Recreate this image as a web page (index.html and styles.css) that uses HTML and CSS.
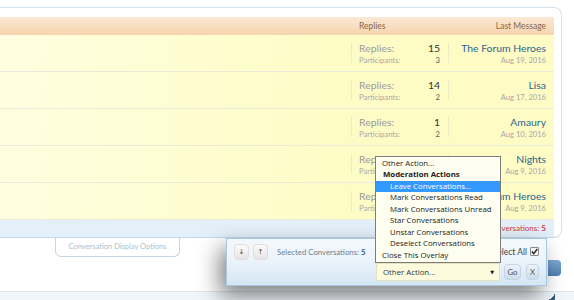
FILE: index.html
```html
<!DOCTYPE html>
<html lang="en">
<head>
    <meta charset="UTF-8">
    <title>Conversations</title>
    <link rel="stylesheet" href="styles.css">
</head>
<body>
    <div class="container">
        <div class="list">
            <div class="row head">
                <div class="title"></div>
                <div class="stats">Replies</div>
                <div class="last">Last Message</div>
            </div>

            <div class="row item">
                <div class="title"></div>
                <div class="stats">
                    <div class="major"><span>Replies:</span><b>15</b></div>
                    <div class="minor"><span>Participants:</span><b>3</b></div>
                </div>
                <div class="last">
                    <a class="user">The Forum Heroes</a>
                    <div class="date">Aug 19, 2016</div>
                </div>
            </div>

            <div class="row item">
                <div class="title"></div>
                <div class="stats">
                    <div class="major"><span>Replies:</span><b>14</b></div>
                    <div class="minor"><span>Participants:</span><b>2</b></div>
                </div>
                <div class="last">
                    <a class="user">Lisa</a>
                    <div class="date">Aug 17, 2016</div>
                </div>
            </div>

            <div class="row item">
                <div class="title"></div>
                <div class="stats">
                    <div class="major"><span>Replies:</span><b>1</b></div>
                    <div class="minor"><span>Participants:</span><b>2</b></div>
                </div>
                <div class="last">
                    <a class="user">Amaury</a>
                    <div class="date">Aug 10, 2016</div>
                </div>
            </div>

            <div class="row item">
                <div class="title"></div>
                <div class="stats">
                    <div class="major"><span>Replies:</span><b>6</b></div>
                    <div class="minor"><span>Participants:</span><b>2</b></div>
                </div>
                <div class="last">
                    <a class="user">Nights</a>
                    <div class="date">Aug 9, 2016</div>
                </div>
            </div>

            <div class="row item">
                <div class="title"></div>
                <div class="stats">
                    <div class="major"><span>Replies:</span><b>3</b></div>
                    <div class="minor"><span>Participants:</span><b>2</b></div>
                </div>
                <div class="last">
                    <a class="user">The Forum Heroes</a>
                    <div class="date">Aug 9, 2016</div>
                </div>
            </div>

            <div class="foot">Selected Conversations: <b>5</b></div>
        </div>
    </div>

    <div class="options">
        <div class="tab">Conversation Display Options</div>
        <div class="blue-end"></div>
    </div>
    <div class="below"><span class="corner"></span></div>

    <!-- inline moderation overlay -->
    <div class="overlay">
        <div class="bar">
            <button class="arrow">&darr;</button>
            <button class="arrow">&uarr;</button>
            <span class="selected">Selected Conversations: <b>5</b></span>
            <span class="select-all">Select All
                <span class="check"><svg width="7" height="7" viewBox="0 0 7 7"><path d="M0.8 3.6 L2.7 5.6 L6.3 1" fill="none" stroke="#222" stroke-width="1.4"/></svg></span>
            </span>
        </div>
        <div class="bar actions">
            <div class="select-wrap">
                <div class="menu">
                    <div class="opt">Other Action...</div>
                    <div class="opt group">Moderation Actions</div>
                    <div class="opt sub active">Leave Conversations...</div>
                    <div class="opt sub">Mark Conversations Read</div>
                    <div class="opt sub">Mark Conversations Unread</div>
                    <div class="opt sub">Star Conversations</div>
                    <div class="opt sub">Unstar Conversations</div>
                    <div class="opt sub">Deselect Conversations</div>
                    <div class="opt">Close This Overlay</div>
                </div>
                <div class="select">Other Action...<span class="caret">&#9660;</span></div>
            </div>
            <button class="btn go">Go</button>
            <button class="btn close">X</button>
        </div>
    </div>
</body>
</html>
```

FILE: styles.css
```css
body {
    margin: 0;
    width: 574px;
    height: 300px;
    overflow: hidden;
    position: relative;
    background: #ffffff;
    font-family: Lato, "Liberation Sans", sans-serif;
    color: #333;
}
.container {
    box-sizing: border-box;
    width: 562px;
    margin-top: 7px;
    padding: 9px 7px 0 0;
    border: 1px solid #d5e3ec;
    border-left: none;
    border-bottom-color: #c4d8e7;
    border-radius: 0 8px 8px 0;
}
.row {
    display: grid;
    grid-template-columns: 1fr 98px 105px;
}
.head {
    height: 18px;
    line-height: 18px;
    font-size: 8.5px;
    color: #8d6746;
    background: linear-gradient(#fbe8d4, #f6d4ae);
}
.head .stats {
    padding-left: 8px;
}
.head .last {
    text-align: right;
    padding-right: 8px;
}
.item {
    height: 36px;
    border-bottom: 1px solid #e9ecd8;
    background: linear-gradient(100deg, #fffee0, #fefcc6 60%, #fefbc4);
}
.item .stats {
    padding: 6px 9px 0 8px;
    background:
        linear-gradient(#efeac4, #efeac4) left 8px / 1px 20px no-repeat,
        linear-gradient(#efeac4, #efeac4) right 8px / 1px 20px no-repeat;
}
.major, .minor {
    display: flex;
    justify-content: space-between;
}
.major {
    font-size: 10.4px;
    line-height: 14px;
    color: #9a9a9a;
}
.major b {
    font-weight: normal;
    color: #333;
}
.minor {
    font-size: 7.6px;
    line-height: 11px;
    color: #a8a8a8;
}
.minor b {
    font-weight: normal;
    color: #555;
}
.item .last {
    padding: 6px 8px 0 0;
    text-align: right;
}
.user {
    display: block;
    font-size: 10.4px;
    line-height: 14px;
    color: #2a6592;
}
.date {
    font-size: 7.6px;
    line-height: 11px;
    color: #a8a8a8;
}
.foot {
    height: 17px;
    line-height: 17px;
    padding-right: 8px;
    text-align: right;
    font-size: 8px;
    color: #d23b3b;
    background: #e3eff9;
}
.options {
    height: 53px;
    display: flex;
    justify-content: space-between;
    align-items: flex-start;
    border-bottom: 1px solid #dbe5ec;
}
.tab {
    box-sizing: border-box;
    width: 125px;
    height: 19px;
    margin-left: 55px;
    line-height: 18px;
    text-align: center;
    font-size: 7.5px;
    color: #a9bfd0;
    border: 1px solid #c6d7e4;
    border-top: none;
    border-radius: 0 0 6px 6px;
}
.blue-end {
    width: 13px;
    height: 16px;
    margin: 22px 13px 0 0;
    border-radius: 0 4px 4px 0;
    background: linear-gradient(#7ea9d1, #4e80b3);
}
.below {
    height: 8px;
    display: flex;
    justify-content: flex-end;
    background: #f1f6fa;
}
.corner {
    width: 6px;
    height: 6px;
    margin: 2px 19px 0 0;
    background: linear-gradient(135deg, transparent 50%, #355a80 50%);
}

/* overlay */
.overlay {
    position: absolute;
    left: 226px;
    top: 238px;
    box-sizing: border-box;
    width: 321px;
    height: 48px;
    padding: 5px 7px 0 7px;
    border: 1px solid #a8c6dd;
    background: linear-gradient(#f3f8fc, #ecf4fa 45%, #d4e6f4);
    box-shadow: -6px 10px 22px rgba(0, 0, 0, 0.5);
}
.bar {
    display: flex;
    align-items: center;
    height: 16px;
}
.arrow {
    box-sizing: border-box;
    width: 15px;
    height: 16px;
    margin-right: 4px;
    padding: 0;
    border: 1px solid #e2dede;
    border-radius: 4px;
    background: linear-gradient(#fbfafa, #e8e3e3);
    font-family: "DejaVu Sans", sans-serif;
    font-size: 7px;
    color: #444;
}
.selected {
    margin-left: 5px;
    font-size: 7.8px;
    color: #6d7f8f;
}
.selected b {
    color: #2a5f8a;
}
.foot b {
    color: #d23b3b;
}
.select-all {
    margin-left: auto;
    display: flex;
    align-items: center;
    font-size: 8.5px;
    color: #444;
}
.check {
    box-sizing: border-box;
    width: 9px;
    height: 9px;
    margin: -2px 0 0 3px;
    display: flex;
    align-items: center;
    justify-content: center;
    border: 1px solid #8a8a8a;
    border-radius: 1px;
    background: #f4f4f4;
}
.actions {
    justify-content: flex-end;
    margin-top: 3px;
    height: 18px;
}
.select-wrap {
    position: relative;
    margin-right: 4px;
}
.select {
    box-sizing: border-box;
    width: 124px;
    height: 18px;
    padding: 0 5px 0 6px;
    display: flex;
    justify-content: space-between;
    align-items: center;
    font-family: "Open Sans", sans-serif;
    font-size: 7.8px;
    color: #333;
    background: #fdfbdd;
    border: 1px solid #e5e1bc;
}
.caret {
    font-family: "DejaVu Sans", sans-serif;
    font-size: 5px;
    color: #111;
}
.menu {
    position: absolute;
    left: -1px;
    bottom: 100%;
    box-sizing: border-box;
    width: 126px;
    padding: 1px 0;
    border: 1px solid #7d7d7d;
    background: #fdfdf0;
    font-family: "Open Sans", sans-serif;
    font-size: 7.8px;
    line-height: 11.5px;
    color: #222;
}
.opt {
    padding-left: 6px;
    white-space: nowrap;
}
.group {
    padding-left: 7px;
    font-weight: bold;
}
.sub {
    padding-left: 14px;
}
.active {
    background: #3399ff;
    color: #ffffff;
}
.btn {
    box-sizing: border-box;
    height: 16px;
    padding: 0;
    border: 1px solid #c3d5e3;
    border-radius: 4px;
    background: linear-gradient(#edf3f9, #cadcea);
    font-family: Lato, sans-serif;
    font-size: 7.8px;
    color: #555;
}
.go {
    width: 17px;
    margin-right: 5px;
}
.close {
    width: 13px;
}
```
